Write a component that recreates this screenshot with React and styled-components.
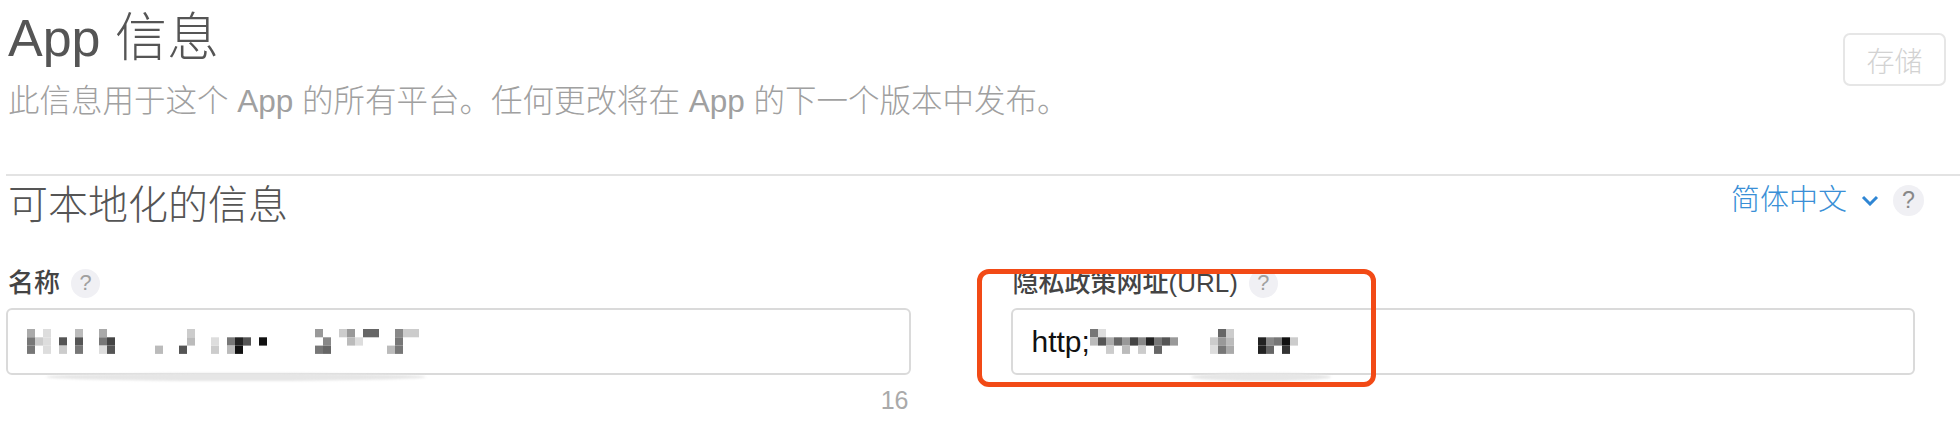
import React from "react";
import styled, { createGlobalStyle } from "styled-components";

const GlobalStyle = createGlobalStyle`
  body {
    margin: 0;
    background: #fff;
    font-family: "Liberation Sans", "Noto Sans CJK SC", sans-serif;
  }
`;

const Page = styled.div`
  width: 1960px;
  height: 442px;
  overflow: hidden;
  padding-left: 6px;
  box-sizing: border-box;
`;

const Header = styled.div`
  display: flex;
  justify-content: space-between;
  align-items: flex-start;
  padding: 8px 14px 0 2px;
  height: 166px;
  box-sizing: border-box;
`;

const Title = styled.h1`
  margin: 0;
  font-size: 52px;
  line-height: 60px;
  font-weight: 300;
  color: #555;
`;

const Subtitle = styled.p`
  margin: 13px 0 0;
  font-size: 31.5px;
  line-height: 40px;
  font-weight: 300;
  color: #a0a0a0;
`;

const SaveButton = styled.button`
  margin-top: 25px;
  width: 103px;
  height: 53px;
  border: 2px solid #e6e6e6;
  border-radius: 7px;
  background: #fff;
  color: #d2d2d2;
  font-family: inherit;
  font-size: 28px;
  font-weight: 300;
  padding: 0;
`;

const Divider = styled.hr`
  margin: 8px 0 0;
  border: 0;
  height: 2px;
  background: #e3e3e3;
`;

const SectionHead = styled.div`
  display: flex;
  justify-content: space-between;
  align-items: flex-start;
  padding: 5px 36px 0 2px;
`;

const SectionTitle = styled.h2`
  margin: 0;
  font-size: 40px;
  line-height: 48px;
  font-weight: 300;
  color: #555;
`;

const LangPicker = styled.div`
  display: flex;
  align-items: center;
  gap: 14px;
  margin-top: 1px;
  color: #3a8fd6;
  font-size: 29px;
  line-height: 36px;
  font-weight: 300;
`;

const Help = styled.span`
  display: inline-flex;
  align-items: center;
  justify-content: center;
  width: ${(p) => p.$size}px;
  height: ${(p) => p.$size}px;
  border-radius: 50%;
  background: #f0f0f4;
  color: ${(p) => p.$color || "#a0a0a0"};
  font-size: ${(p) => p.$size * 0.75}px;
  font-weight: 300;
`;

const Fields = styled.div`
  display: grid;
  grid-template-columns: 1fr 1fr;
  column-gap: 100px;
  padding-right: 45px;
  margin-top: 38px;
`;

const Field = styled.div`
  position: relative;
  display: flex;
  flex-direction: column;
`;

const Label = styled.div`
  display: flex;
  align-items: center;
  gap: 11px;
  padding-left: 2px;
  font-size: 26px;
  line-height: 32px;
  font-weight: 500;
  color: #444;
`;

const Input = styled.div`
  margin-top: 9px;
  height: 67px;
  border: 2px solid #dadada;
  border-radius: 6px;
  box-sizing: border-box;
  display: flex;
  align-items: center;
  padding-left: 19px;
  font-size: 30px;
  color: #111;
  background: #fff;
`;

const Counter = styled.div`
  align-self: flex-end;
  margin-top: 10px;
  padding-right: 2px;
  font-size: 25px;
  line-height: 30px;
  font-weight: 300;
  color: #aaa;
`;

const Smudge = styled.div`
  position: absolute;
  left: ${(p) => p.$left}px;
  top: 106px;
  width: ${(p) => p.$width}px;
  height: 8px;
  border-radius: 50%;
  background: #e6e6e6;
  filter: blur(1px);
  pointer-events: none;
`;

const Highlight = styled.div`
  position: absolute;
  left: -34px;
  top: 2px;
  width: 399px;
  height: 118px;
  border: 5px solid #f24a16;
  border-radius: 12px;
  box-sizing: border-box;
  pointer-events: none;
`;

const nameCells = [
  [0, 0, "#aaa"], [0, 1, "#777"], [0, 2, "#777"], [1, 1, "#ccc"],
  [2, 0, "#ddd"], [2, 1, "#ddd"], [2, 2, "#ddd"], [4, 1, "#555"], [4, 2, "#ccc"],
  [6, 0, "#bbb"], [6, 1, "#555"], [6, 2, "#777"], [9, 0, "#aaa"], [9, 1, "#777"],
  [9, 2, "#ddd"], [10, 1, "#444"], [10, 2, "#555"], [16, 2, "#bbb"], [19, 2, "#555"],
  [20, 0, "#ccc"], [20, 1, "#bbb"], [23, 2, "#ccc"], [23, 1, "#ddd"], [25, 1, "#777"],
  [25, 2, "#bbb"], [26, 1, "#222"], [26, 2, "#111"], [27, 1, "#555"], [29, 1, "#111"],
  [36, 0, "#999"], [36, 2, "#777"], [37, 1, "#888"], [37, 2, "#666"], [39, 0, "#ccc"],
  [40, 0, "#999"], [40, 1, "#bbb"], [41, 1, "#ddd"], [42, 0, "#666"], [43, 0, "#666"],
  [45, 2, "#bbb"], [46, 0, "#888"], [46, 1, "#777"], [46, 2, "#777"], [47, 0, "#ccc"], [48, 0, "#ccc"],
];

const urlCells = [
  [0, 0, "#777"], [0, 1, "#bbb"], [1, 0, "#ddd"], [1, 1, "#555"], [2, 1, "#aaa"], [2, 2, "#ccc"],
  [3, 1, "#666"], [4, 1, "#999"], [4, 2, "#bbb"], [5, 1, "#444"], [6, 1, "#888"], [6, 2, "#ccc"],
  [7, 1, "#222"], [8, 1, "#777"], [8, 2, "#666"], [9, 1, "#555"], [10, 1, "#999"],
  [15, 1, "#ccc"], [15, 2, "#ddd"], [16, 0, "#666"], [16, 1, "#999"], [16, 2, "#777"],
  [17, 0, "#ccc"], [17, 1, "#bbb"], [17, 2, "#aaa"], [21, 1, "#222"], [21, 2, "#222"],
  [22, 1, "#888"], [22, 2, "#666"], [23, 1, "#777"], [24, 1, "#111"], [24, 2, "#333"], [25, 1, "#ccc"],
];

function Mosaic({ cells, cols }) {
  return (
    <svg width={cols * 8} height={25} style={{ display: "block" }}>
      {cells.map(([x, y, c], i) => (
        <rect key={i} x={x * 8} y={y * 8.3} width={8} height={8.3} fill={c} />
      ))}
    </svg>
  );
}

function Chevron() {
  return (
    <svg width="18" height="12" viewBox="0 0 18 12">
      <polyline points="2,3 9,10 16,3" fill="none" stroke="#2f86d4" strokeWidth="3" />
    </svg>
  );
}

export default function App() {
  return (
    <Page>
      <GlobalStyle />
      <Header>
        <div>
          <Title>App 信息</Title>
          <Subtitle>此信息用于这个 App 的所有平台。任何更改将在 App 的下一个版本中发布。</Subtitle>
        </div>
        <SaveButton>存储</SaveButton>
      </Header>
      <Divider />
      <SectionHead>
        <SectionTitle>可本地化的信息</SectionTitle>
        <LangPicker>
          <span>简体中文</span>
          <Chevron />
          <Help $size={31} $color="#888">?</Help>
        </LangPicker>
      </SectionHead>
      <Fields>
        <Field>
          <Label>
            名称 <Help $size={29}>?</Help>
          </Label>
          <Input>
            <Mosaic cells={nameCells} cols={49} />
          </Input>
          <Smudge $left={40} $width={380} />
          <Counter>16</Counter>
        </Field>
        <Field>
          <Label>
            隐私政策网址(URL) <Help $size={29}>?</Help>
          </Label>
          <Input>
            http;
            <Mosaic cells={urlCells} cols={26} />
          </Input>
          <Smudge $left={180} $width={140} />
          <Highlight />
        </Field>
      </Fields>
    </Page>
  );
}
